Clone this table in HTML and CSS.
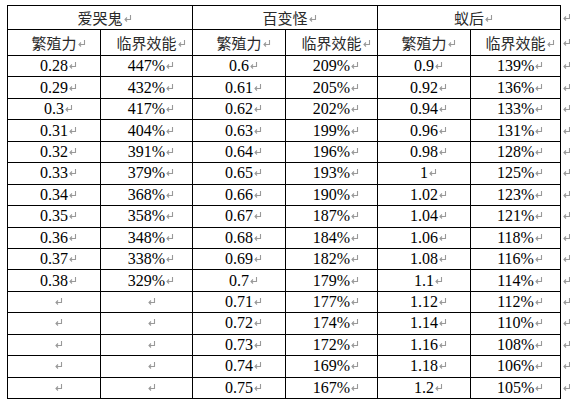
FILE: index.html
```html
<!DOCTYPE html>
<html>
<head>
<meta charset="utf-8">
<link rel="stylesheet" href="styles.css">
</head>
<body>
<table class="grid" id="grid">
<colgroup>
<col class="c1"><col class="c2"><col class="c3"><col class="c4"><col class="c5"><col class="c6"><col class="c7">
</colgroup>
<thead>
<tr class="h1">
<th colspan="2" class="zh">爱哭鬼<i class="pm"></i></th>
<th colspan="2" class="zh">百变怪<i class="pm"></i></th>
<th colspan="2" class="zh">蚁后<i class="pm"></i></th>
<td class="end"><i class="pm"></i></td>
</tr>
<tr class="h2">
<th class="zh">繁殖力<i class="pm"></i></th><th class="zh">临界效能<i class="pm"></i></th>
<th class="zh">繁殖力<i class="pm"></i></th><th class="zh">临界效能<i class="pm"></i></th>
<th class="zh">繁殖力<i class="pm"></i></th><th class="zh">临界效能<i class="pm"></i></th>
<td class="end"><i class="pm"></i></td>
</tr>
</thead>
<tbody id="body"></tbody>
</table>
<script src="app.js"></script>
</body>
</html>
```
FILE: styles.css
```css
html, body {
  margin: 0;
  padding: 0;
  background: #fff;
}
body {
  padding: 5px 0 0 7px;
}
.grid {
  border-collapse: collapse;
  table-layout: fixed;
  width: 563px;
  font-family: "Liberation Serif", "Times New Roman", serif;
  font-size: 16px;
  color: #000;
}
.c1 { width: 93px; }
.c2 { width: 92px; }
.c3 { width: 93px; }
.c4 { width: 92px; }
.c5 { width: 93px; }
.c6 { width: 90px; }
.c7 { width: 10px; }
.grid th, .grid td {
  border: 1px solid #000;
  padding: 0;
  text-align: center;
  vertical-align: middle;
  font-weight: normal;
  white-space: nowrap;
  line-height: 18px;
}
.grid td.end {
  border: none;
  text-align: left;
  padding-left: 2px;
}
.zh {
  font-family: "Noto Sans CJK SC", "Noto Sans", sans-serif;
  font-weight: 300;
  font-size: 15px;
  color: #2a2a2a;
}
.h1 { height: 24px; }
.h2 { height: 26px; }
.row { height: 21.44px; }
.pm {
  display: inline-block;
  width: 0;
  height: 7px;
  position: relative;
  vertical-align: 2px;
}
.pm::after {
  content: "";
  position: absolute;
  left: 1px;
  top: 0;
  width: 8px;
  height: 7px;
  background-image: url("data:image/svg+xml;utf8,<svg xmlns='http://www.w3.org/2000/svg' width='8' height='7' viewBox='0 0 8 7'><path d='M6.5 0V4.5H1M3 2.5L1 4.5L3 6.5' fill='none' stroke='%23999999' stroke-width='1.1'/></svg>");
}
.end .pm::after { left: 0; }
```
FILE: app.js
```js
const a = [[0.28,447],[0.29,432],[0.3,417],[0.31,404],[0.32,391],[0.33,379],[0.34,368],[0.35,358],[0.36,348],[0.37,338],[0.38,329]];
const b = [[0.6,209],[0.61,205],[0.62,202],[0.63,199],[0.64,196],[0.65,193],[0.66,190],[0.67,187],[0.68,184],[0.69,182],[0.7,179],[0.71,177],[0.72,174],[0.73,172],[0.74,169],[0.75,167]];
const c = [[0.9,139],[0.92,136],[0.94,133],[0.96,131],[0.98,128],[1,125],[1.02,123],[1.04,121],[1.06,118],[1.08,116],[1.1,114],[1.12,112],[1.14,110],[1.16,108],[1.18,106],[1.2,105]];
const pm = '<i class="pm"></i>';
const cells = (p) => p ? `<td>${p[0]}${pm}</td><td>${p[1]}%${pm}</td>` : `<td>${pm}</td><td>${pm}</td>`;
let html = '';
for (let i = 0; i < 16; i++) {
  html += `<tr class="row">${cells(a[i])}${cells(b[i])}${cells(c[i])}<td class="end">${pm}</td></tr>`;
}
document.getElementById('body').innerHTML = html;
```
